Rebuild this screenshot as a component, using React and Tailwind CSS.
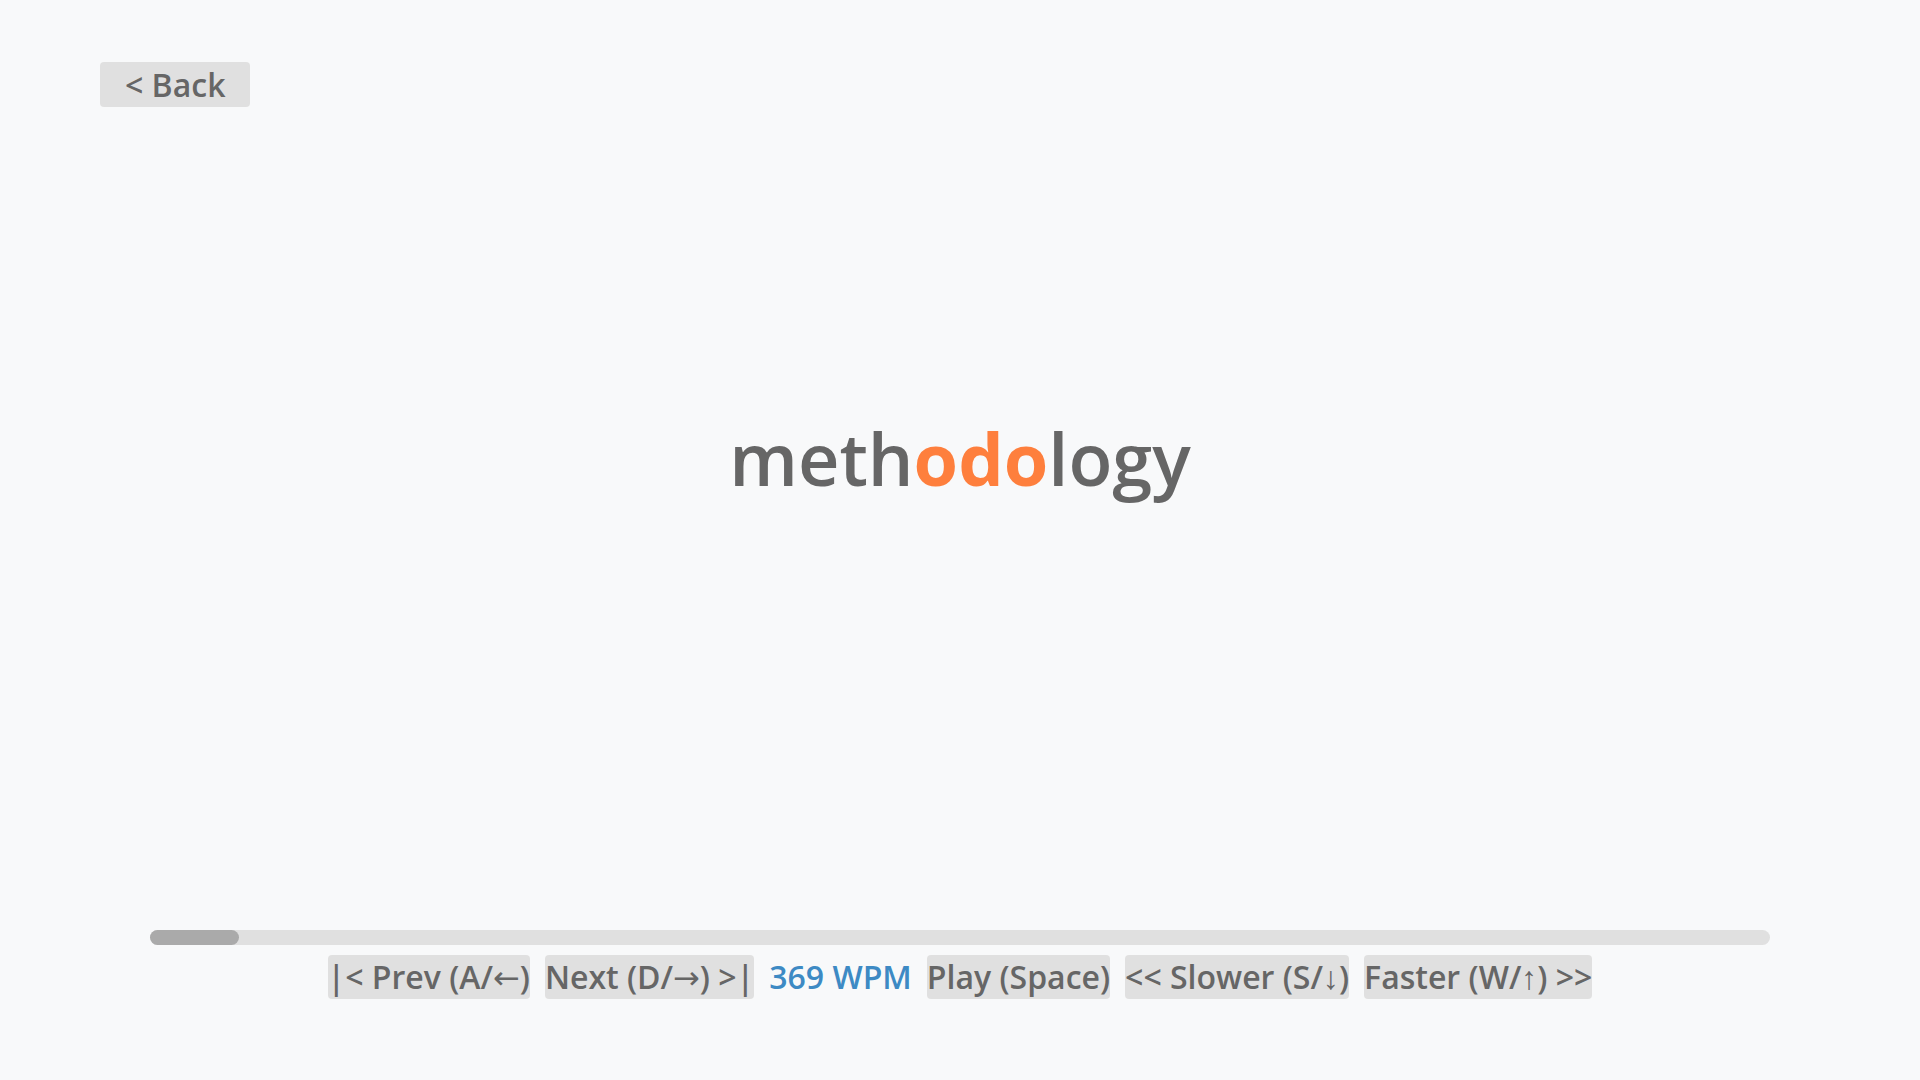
function Arrow({ children }) {
  return <span className="font-['DejaVu_Sans',sans-serif] font-normal">{children}</span>;
}

function VArrow({ children }) {
  return <span className="font-['Liberation_Sans',sans-serif] font-normal">{children}</span>;
}

export default function App() {
  const buttons = "bg-[#e0e0e0] rounded-[4px] px-0 h-[44px] leading-[44px] text-[32px] font-semibold text-[#666666]";
  return (
    <div className="h-screen w-full bg-[#f8f9fa] flex flex-col font-['Open_Sans','DejaVu_Sans',sans-serif] overflow-hidden">
      <div className="pt-[62px] pl-[100px]">
        <button className="bg-[#e0e0e0] rounded-[4px] px-[25px] h-[45px] leading-[45px] text-[32px] font-semibold text-[#666666]">
          &lt; Back
        </button>
      </div>

      <div className="mt-[297px] flex justify-center">
        <div className="text-[72px] font-semibold text-[#666666] leading-normal">
          meth<span className="font-bold text-[#fe7f3d]">odo</span>logy
        </div>
      </div>

      <div className="flex-1" />

      <div className="px-[150px]">
        <div className="h-[15px] w-full rounded-full bg-[#e0e0e0]">
          <div className="h-full w-[89px] rounded-full bg-[#aaaaaa]" />
        </div>
      </div>

      <div className="mt-[10px] mb-[81px] flex justify-center items-center gap-[15px]">
        <button className={buttons}>|&lt; Prev (A/<Arrow>←</Arrow>)</button>
        <button className={buttons}>Next (D/<Arrow>→</Arrow>) &gt;|</button>
        <span className="text-[32px] leading-[44px] font-semibold text-[#3d8ac4]">369 WPM</span>
        <button className={buttons}>Play (Space)</button>
        <button className={buttons}>&lt;&lt; Slower (S/<VArrow>↓</VArrow>)</button>
        <button className={buttons}>Faster (W/<VArrow>↑</VArrow>) &gt;&gt;</button>
      </div>
    </div>
  );
}
